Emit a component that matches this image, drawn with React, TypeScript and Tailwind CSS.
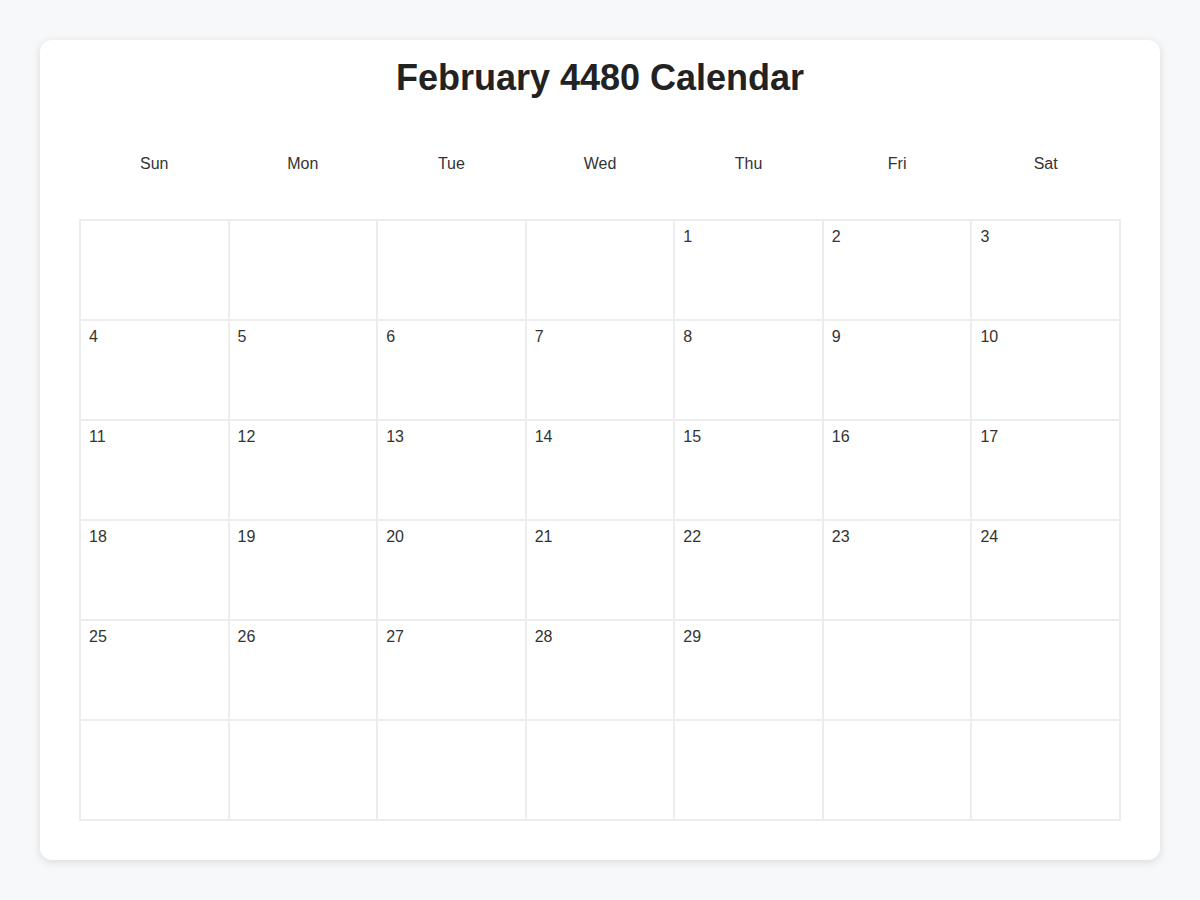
import React from "react";

const DAYS = ["Sun", "Mon", "Tue", "Wed", "Thu", "Fri", "Sat"];

// February 4480 starts on a Thursday, 29 days
const FIRST_DAY = 4;
const DAYS_IN_MONTH = 29;

const buildCells = (): (number | null)[] => {
  const cells: (number | null)[] = [];
  for (let i = 0; i < FIRST_DAY; i++) cells.push(null);
  for (let d = 1; d <= DAYS_IN_MONTH; d++) cells.push(d);
  while (cells.length < 42) cells.push(null);
  return cells;
};

const App: React.FC = () => {
  const cells = buildCells();

  return (
    <div className="min-h-screen bg-[#f7f8fa] p-10 font-['Liberation_Sans',Arial,sans-serif] text-[#333]">
      <div className="rounded-xl bg-white px-10 pb-[39px] pt-[17px] shadow-[0_2px_10px_rgba(0,0,0,0.12)]">
        <h1 className="text-center text-[36px] font-bold leading-[41px] text-[#222]">
          February 4480 Calendar
        </h1>

        <div className="mt-[46px] grid h-[40px] grid-cols-7 items-center">
          {DAYS.map((day) => (
            <div key={day} className="text-center text-base">
              {day}
            </div>
          ))}
        </div>

        <div className="-mx-px mt-[35px] grid grid-cols-7 border border-[#ededed]">
          {cells.map((day, i) => (
            <div
              key={i}
              className="h-[100px] border border-[#ededed] px-2 pt-[7px] text-base leading-[18px]"
            >
              {day ?? ""}
            </div>
          ))}
        </div>
      </div>
    </div>
  );
};

export default App;
